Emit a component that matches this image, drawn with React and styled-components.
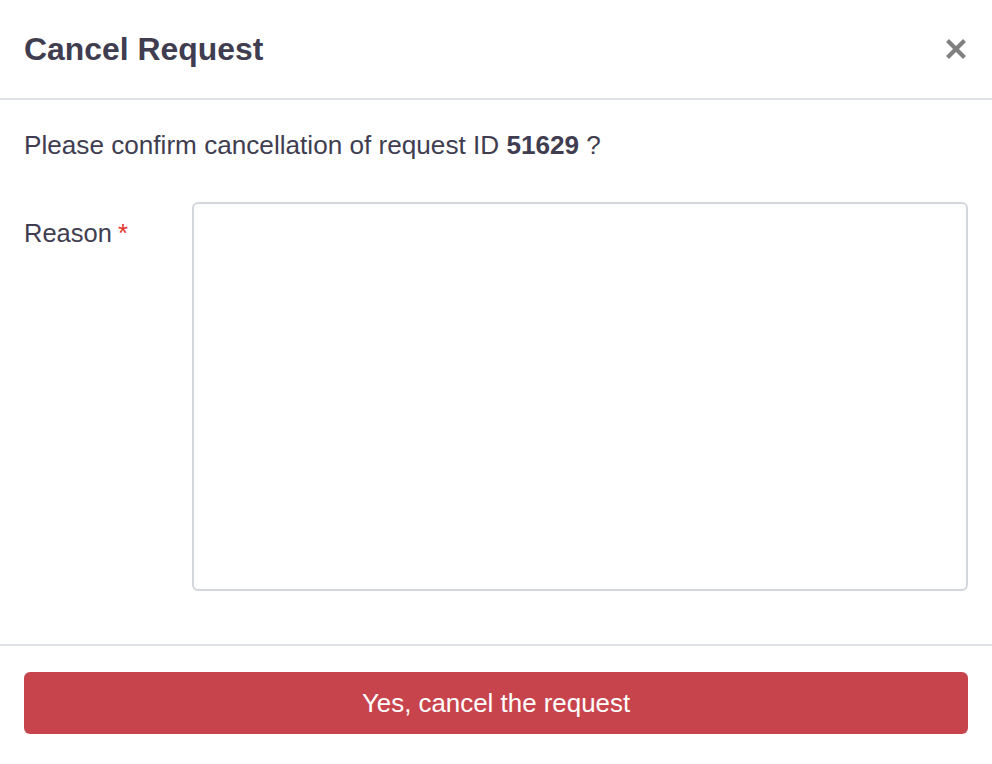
import React from "react";
import styled, { createGlobalStyle } from "styled-components";

const GlobalStyle = createGlobalStyle`
  html, body {
    margin: 0;
    padding: 0;
    background: #fff;
  }
  body {
    font-family: "Liberation Sans", Arial, Helvetica, sans-serif;
    color: #403d50;
  }
`;

const Modal = styled.div`
  width: 992px;
  height: 764px;
  display: flex;
  flex-direction: column;
  background: #fff;
`;

const Header = styled.div`
  height: 98px;
  display: flex;
  align-items: center;
  justify-content: space-between;
  padding: 0 26px 0 24px;
  border-bottom: 2px solid #dfe2e6;
  box-sizing: content-box;
`;

const Title = styled.h2`
  margin: 0;
  font-size: 31.9px;
  font-weight: 700;
  color: #403d50;
`;

const CloseButton = styled.button`
  border: 0;
  background: none;
  padding: 0;
  width: 20px;
  height: 20px;
  display: flex;
  cursor: pointer;
`;

const Body = styled.div`
  flex: 1;
  padding: 26px 24px 53px;
  display: flex;
  flex-direction: column;
`;

const Message = styled.p`
  margin: 0;
  font-size: 26.15px;
  line-height: 39px;
  color: #403d50;
  b {
    font-weight: 700;
  }
`;

const FormRow = styled.div`
  flex: 1;
  margin-top: 37px;
  display: flex;
`;

const Label = styled.label`
  width: 168px;
  flex-shrink: 0;
  padding-top: 12px;
  font-size: 25.5px;
  line-height: 39px;
  color: #403d50;
`;

const Required = styled.span`
  color: #e0332f;
  margin-left: 6px;
`;

const TextArea = styled.textarea`
  flex: 1;
  box-sizing: border-box;
  border: 2px solid #d3d6db;
  border-radius: 6px;
  resize: none;
  outline: none;
  font: inherit;
  font-size: 24px;
  padding: 10px 14px;
`;

const Footer = styled.div`
  border-top: 2px solid #dfe2e6;
  padding: 26px 24px 30px;
`;

const DangerButton = styled.button`
  width: 100%;
  height: 62px;
  border: 0;
  border-radius: 6px;
  background: #c8444c;
  color: #fff;
  font-family: "Liberation Sans", Arial, sans-serif;
  font-size: 25.9px;
  cursor: pointer;
`;

const CloseIcon = () => (
  <svg width="20" height="20" viewBox="0 0 20 20">
    <path
      d="M3 3 L17 17 M17 3 L3 17"
      stroke="#808080"
      strokeWidth="4.2"
      strokeLinecap="square"
      fill="none"
    />
  </svg>
);

export default function App() {
  return (
    <>
      <GlobalStyle />
      <Modal>
        <Header>
          <Title>Cancel Request</Title>
          <CloseButton aria-label="Close">
            <CloseIcon />
          </CloseButton>
        </Header>
        <Body>
          <Message>
            Please confirm cancellation of request ID <b>51629</b> ?
          </Message>
          <FormRow>
            <Label>
              Reason<Required>*</Required>
            </Label>
            <TextArea />
          </FormRow>
        </Body>
        <Footer>
          <DangerButton>Yes, cancel the request</DangerButton>
        </Footer>
      </Modal>
    </>
  );
}
